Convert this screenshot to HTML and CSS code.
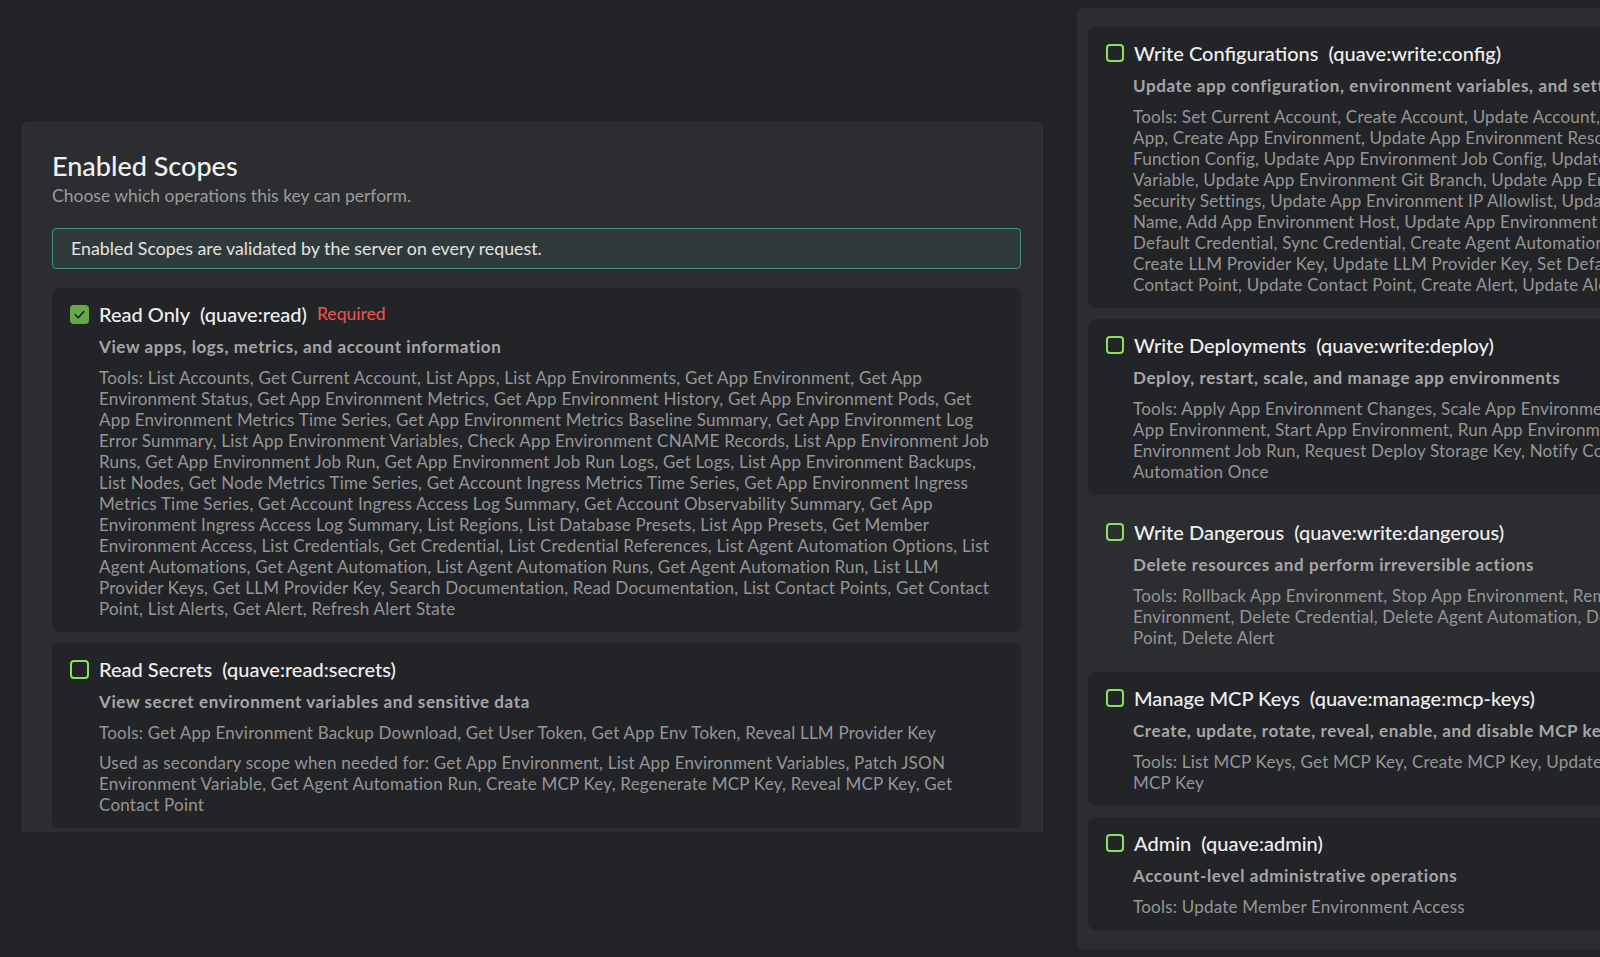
FILE: index.html
```html
<!DOCTYPE html>
<html lang="en">
<head>
<meta charset="utf-8">
<title>Enabled Scopes</title>
<link rel="stylesheet" href="styles.css">
</head>
<body>
<div class="page">
  <section class="scopes-card">
    <h2 class="card-title">Enabled Scopes</h2>
    <p class="card-subtitle">Choose which operations this key can perform.</p>
    <div class="notice">Enabled Scopes are validated by the server on every request.</div>
    <ul class="scope-list">
      <li class="scope">
        <div class="scope-head">
          <span class="checkbox checkbox--checked"><svg viewBox="0 0 19 19" width="19" height="19"><polyline points="5.2,9.8 8.2,12.8 13.8,6.6" fill="none" stroke="#1d2619" stroke-width="1.6" stroke-linecap="round" stroke-linejoin="round"/></svg></span>
          <span class="scope-name">Read Only</span>
          <span class="scope-key">(quave:read)</span>
          <span class="scope-required">Required</span>
        </div>
        <div class="scope-body">
          <p class="scope-desc">View apps, logs, metrics, and account information</p>
          <p class="scope-tools">Tools: List Accounts, Get Current Account, List Apps, List App Environments, Get App Environment, Get App<br>Environment Status, Get App Environment Metrics, Get App Environment History, Get App Environment Pods, Get<br>App Environment Metrics Time Series, Get App Environment Metrics Baseline Summary, Get App Environment Log<br>Error Summary, List App Environment Variables, Check App Environment CNAME Records, List App Environment Job<br>Runs, Get App Environment Job Run, Get App Environment Job Run Logs, Get Logs, List App Environment Backups,<br>List Nodes, Get Node Metrics Time Series, Get Account Ingress Metrics Time Series, Get App Environment Ingress<br>Metrics Time Series, Get Account Ingress Access Log Summary, Get Account Observability Summary, Get App<br>Environment Ingress Access Log Summary, List Regions, List Database Presets, List App Presets, Get Member<br>Environment Access, List Credentials, Get Credential, List Credential References, List Agent Automation Options, List<br>Agent Automations, Get Agent Automation, List Agent Automation Runs, Get Agent Automation Run, List LLM<br>Provider Keys, Get LLM Provider Key, Search Documentation, Read Documentation, List Contact Points, Get Contact<br>Point, List Alerts, Get Alert, Refresh Alert State</p>
        </div>
      </li>
      <li class="scope">
        <div class="scope-head">
          <span class="checkbox"></span>
          <span class="scope-name">Read Secrets</span>
          <span class="scope-key">(quave:read:secrets)</span>
        </div>
        <div class="scope-body">
          <p class="scope-desc">View secret environment variables and sensitive data</p>
          <p class="scope-tools">Tools: Get App Environment Backup Download, Get User Token, Get App Env Token, Reveal LLM Provider Key</p>
          <p class="scope-tools">Used as secondary scope when needed for: Get App Environment, List App Environment Variables, Patch JSON<br>Environment Variable, Get Agent Automation Run, Create MCP Key, Regenerate MCP Key, Reveal MCP Key, Get<br>Contact Point</p>
        </div>
      </li>
    </ul>
  </section>

  <section class="panel">
    <ul class="scope-list scope-list--panel">
      <li class="scope">
        <div class="scope-head">
          <span class="checkbox"></span>
          <span class="scope-name">Write Configurations</span>
          <span class="scope-key">(quave:write:config)</span>
        </div>
        <div class="scope-body">
          <p class="scope-desc">Update app configuration, environment variables, and settings</p>
          <p class="scope-tools">Tools: Set Current Account, Create Account, Update Account, Create App, Update<br>App, Create App Environment, Update App Environment Resources, Update App Environment<br>Function Config, Update App Environment Job Config, Update App Environment Environment<br>Variable, Update App Environment Git Branch, Update App Environment Build Settings, Update App Environment<br>Security Settings, Update App Environment IP Allowlist, Update App Environment Display<br>Name, Add App Environment Host, Update App Environment Host, Create Credential, Set<br>Default Credential, Sync Credential, Create Agent Automation, Update Agent Automation,<br>Create LLM Provider Key, Update LLM Provider Key, Set Default LLM Provider Key, Create<br>Contact Point, Update Contact Point, Create Alert, Update Alert</p>
        </div>
      </li>
      <li class="scope">
        <div class="scope-head">
          <span class="checkbox"></span>
          <span class="scope-name">Write Deployments</span>
          <span class="scope-key">(quave:write:deploy)</span>
        </div>
        <div class="scope-body">
          <p class="scope-desc">Deploy, restart, scale, and manage app environments</p>
          <p class="scope-tools">Tools: Apply App Environment Changes, Scale App Environment, Restart<br>App Environment, Start App Environment, Run App Environment Job, Cancel App<br>Environment Job Run, Request Deploy Storage Key, Notify Completed Upload, Run Agent<br>Automation Once</p>
        </div>
      </li>
      <li class="scope scope--plain">
        <div class="scope-head">
          <span class="checkbox"></span>
          <span class="scope-name">Write Dangerous</span>
          <span class="scope-key">(quave:write:dangerous)</span>
        </div>
        <div class="scope-body">
          <p class="scope-desc">Delete resources and perform irreversible actions</p>
          <p class="scope-tools">Tools: Rollback App Environment, Stop App Environment, Remove App Environment Host, Delete App<br>Environment, Delete Credential, Delete Agent Automation, Delete LLM Provider Key, Delete Contact<br>Point, Delete Alert</p>
        </div>
      </li>
      <li class="scope">
        <div class="scope-head">
          <span class="checkbox"></span>
          <span class="scope-name">Manage MCP Keys</span>
          <span class="scope-key">(quave:manage:mcp-keys)</span>
        </div>
        <div class="scope-body">
          <p class="scope-desc">Create, update, rotate, reveal, enable, and disable MCP keys</p>
          <p class="scope-tools">Tools: List MCP Keys, Get MCP Key, Create MCP Key, Update MCP Key, Rotate MCP Key, Enable MCP Key, Disable<br>MCP Key</p>
        </div>
      </li>
      <li class="scope">
        <div class="scope-head">
          <span class="checkbox"></span>
          <span class="scope-name">Admin</span>
          <span class="scope-key">(quave:admin)</span>
        </div>
        <div class="scope-body">
          <p class="scope-desc">Account-level administrative operations</p>
          <p class="scope-tools">Tools: Update Member Environment Access</p>
        </div>
      </li>
    </ul>
  </section>
</div>
</body>
</html>
```

FILE: styles.css
```css
html, body {
  margin: 0;
  padding: 0;
  height: 100%;
  overflow: hidden;
}

body {
  background: #222326;
  font-family: "Lato", "Noto Sans", sans-serif;
  color: #ededed;
}

.page {
  display: flex;
  align-items: flex-start;
  width: 1600px;
}

.scopes-card {
  flex: 0 0 1021px;
  box-sizing: border-box;
  margin: 122px 0 0 22px;
  padding: 28px 21px 4px 29px;
  background: #2c2d30;
  border: 1px solid #323336;
  border-bottom: none;
  border-radius: 6px 6px 0 0;
}

.card-title {
  margin: 0;
  font-size: 27px;
  line-height: 30px;
  font-weight: 500;
  color: #f1f1f1;
}

.card-subtitle {
  margin: 4px 0 0;
  font-size: 17.5px;
  line-height: 22px;
  color: #9b9b9b;
}

.notice {
  margin-top: 21px;
  padding: 9px 18px;
  font-size: 17.8px;
  line-height: 21px;
  color: #e2e2e2;
  background: #313a3a;
  border: 1px solid #3f9777;
  border-radius: 4px;
}

.scope-list {
  list-style: none;
  margin: 19px 0 0;
  padding: 0;
  display: flex;
  flex-direction: column;
  gap: 11px;
}

.scope {
  background: #232427;
  border-radius: 8px;
  padding: 13px 21px 13px 18px;
}

.scope--plain {
  background: transparent;
}

.scope-head {
  display: flex;
  align-items: center;
  gap: 10px;
  height: 26px;
  font-size: 20px;
  line-height: 26px;
  font-weight: 500;
  color: #efefef;
  white-space: nowrap;
}

.checkbox {
  flex: 0 0 auto;
  box-sizing: border-box;
  width: 19px;
  height: 19px;
  border: 2.5px solid #8de05b;
  border-radius: 4px;
}

.checkbox svg {
  display: block;
}

.checkbox--checked {
  border: none;
  background: #6aa64b;
}

.scope-required {
  font-size: 17.5px;
  color: #e5534b;
}

.scope-body {
  padding-left: 29px;
}

.scope-desc {
  margin: 9px 0 0;
  font-size: 17px;
  line-height: 22px;
  font-weight: 700;
  letter-spacing: 0.6px;
  color: #a6a6a6;
  white-space: nowrap;
}

.scope-tools {
  margin: 9px 0 0;
  font-size: 17px;
  line-height: 21px;
  letter-spacing: 0.22px;
  color: #969696;
  white-space: nowrap;
}

.scope-tools + .scope-tools {
  margin-top: 9px;
}

.panel {
  flex: 0 0 1010px;
  box-sizing: border-box;
  margin: 8px 0 0 34px;
  padding: 19px 11px 19px;
  background: #2c2d30;
  border-radius: 6px 0 0 6px;
}

.scope-list--panel {
  margin-top: 0;
}

.scope-list--panel .scope {
  padding-left: 18px;
}

.scope-list--panel .checkbox {
  width: 18px;
  height: 18px;
}

.scope-list--panel .scope-body {
  padding-left: 27px;
}
```
